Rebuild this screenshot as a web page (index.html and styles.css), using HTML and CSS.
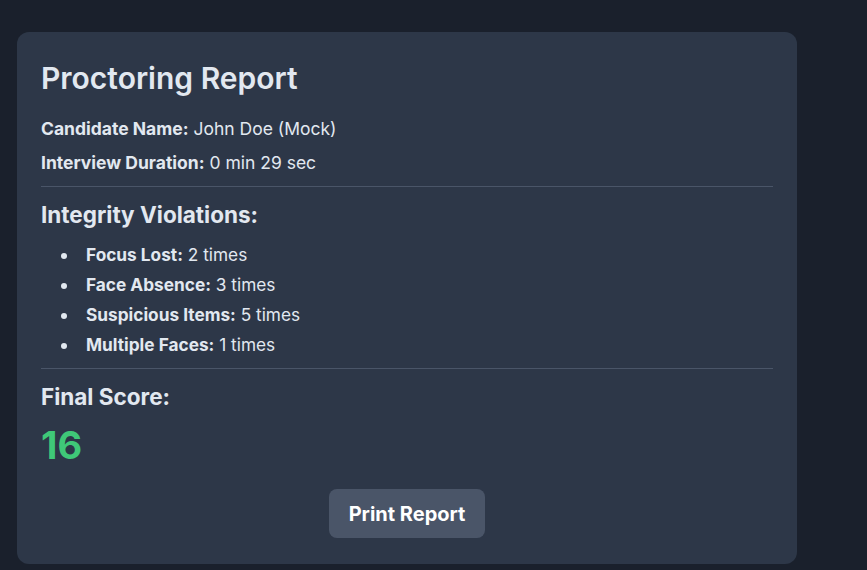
FILE: index.html
```html
<!DOCTYPE html>
<html>
<head>
<meta charset="utf-8">
<link rel="stylesheet" href="styles.css">
</head>
<body>
<div class="page">
  <section class="card">
    <h1 class="title">Proctoring Report</h1>
    <p class="line"><strong>Candidate Name:</strong> John Doe (Mock)</p>
    <p class="line"><strong>Interview Duration:</strong> 0 min 29 sec</p>
    <hr class="divider">
    <h2 class="subtitle">Integrity Violations:</h2>
    <ul class="list">
      <li><strong>Focus Lost:</strong> 2 times</li>
      <li><strong>Face Absence:</strong> 3 times</li>
      <li><strong>Suspicious Items:</strong> 5 times</li>
      <li><strong>Multiple Faces:</strong> 1 times</li>
    </ul>
    <hr class="divider">
    <h2 class="subtitle">Final Score:</h2>
    <div class="score">16</div>
    <div class="actions">
      <button class="btn">Print Report</button>
    </div>
  </section>
</div>
</body>
</html>
```
FILE: styles.css
```css
* { box-sizing: border-box; }
html, body {
  margin: 0;
  padding: 0;
  background: #1a202c;
  font-family: Inter, "Noto Sans", sans-serif;
  color: #e2e8f0;
}
.page {
  padding: 32px 0 0 17px;
}
.card {
  width: 780px;
  background: #2d3748;
  border-radius: 12px;
  padding: 24px 24px 26px 24px;
}
.title {
  margin: 0 0 17px 0;
  font-size: 30px;
  line-height: 44px;
  font-weight: 600;
  color: #e2e8f0;
}
.line {
  margin: 0 0 10px 0;
  font-size: 17.5px;
  line-height: 24px;
}
.line:last-of-type { margin-bottom: 0; }
strong { font-weight: 700; }
.divider {
  border: 0;
  border-top: 1px solid #4a5568;
  margin: 11px 0 13px 0;
}
.subtitle {
  margin: 0;
  font-size: 22.5px;
  line-height: 30px;
  font-weight: 700;
}
.list {
  margin: 13px 0 0 0;
  padding-left: 38px;
}
.list li {
  font-size: 17.25px;
  line-height: 24px;
  margin-bottom: 6px;
  padding-left: 7px;
}
.list li:last-child { margin-bottom: 0; }
.score {
  margin-top: 12px;
  font-size: 38px;
  line-height: 43px;
  font-weight: 700;
  color: #3fc878;
}
.actions {
  display: flex;
  justify-content: center;
  margin-top: 22px;
}
.btn {
  background: #4a5568;
  color: #ffffff;
  border: 0;
  border-radius: 8px;
  height: 49px;
  padding: 0 20px;
  font-family: Inter, "Noto Sans", sans-serif;
  font-size: 20px;
  font-weight: 700;
}
```
